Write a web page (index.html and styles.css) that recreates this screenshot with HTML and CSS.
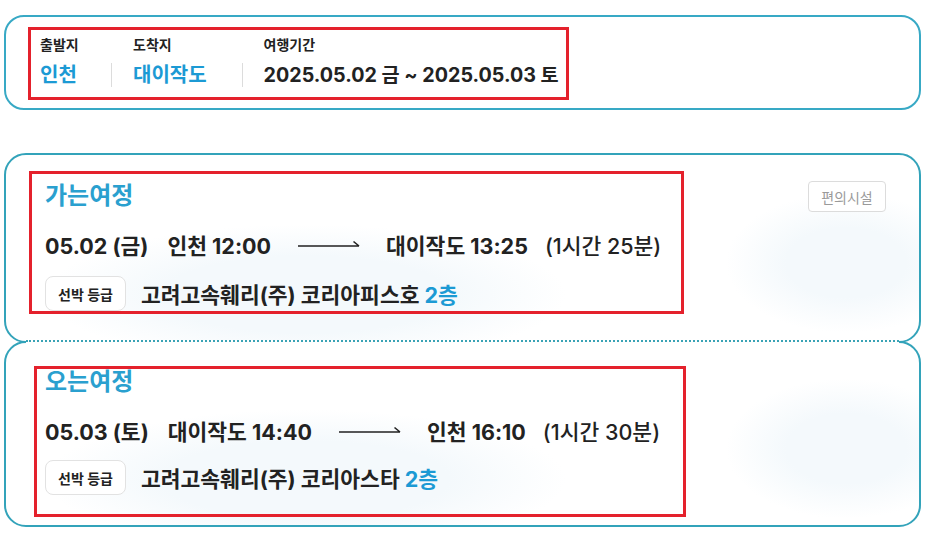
FILE: index.html
```html
<!DOCTYPE html>
<html lang="ko">
<head>
<meta charset="utf-8">
<link rel="stylesheet" href="styles.css">
</head>
<body>
<div class="page">
  <section class="summary">
    <div class="mark summary-inner">
      <div class="col">
        <div class="lbl">출발지</div>
        <div class="val blue">인천</div>
      </div>
      <div class="col sep">
        <div class="lbl">도착지</div>
        <div class="val blue">대이작도</div>
      </div>
      <div class="col sep">
        <div class="lbl">여행기간</div>
        <div class="val period">2025.05.02 금 ~ 2025.05.03 토</div>
      </div>
    </div>
  </section>

  <section class="ticket">
    <div class="leg leg-out">
      <div class="mark leg-inner out-inner">
        <h2 class="leg-title">가는여정</h2>
        <div class="route">
          <span class="date">05.02 (금)</span>
          <span class="from">인천 12:00</span>
          <svg class="arrow" width="62" height="10" viewBox="0 0 62 10"><path d="M0 7H61M55.5 2.5L61 7" fill="none" stroke="#222" stroke-width="1.6"/></svg>
          <span class="to">대이작도 13:25</span>
          <span class="dur">(1시간 25분)</span>
        </div>
        <div class="ship">
          <span class="badge">선박 등급</span>
          <span class="ship-name">고려고속훼리(주) 코리아피스호 <em>2층</em></span>
        </div>
      </div>
      <button class="fac">편의시설</button>
    </div>
    <div class="leg leg-in">
      <div class="mark leg-inner in-inner">
        <h2 class="leg-title">오는여정</h2>
        <div class="route">
          <span class="date">05.03 (토)</span>
          <span class="from">대이작도 14:40</span>
          <svg class="arrow" width="62" height="10" viewBox="0 0 62 10"><path d="M0 7H61M55.5 2.5L61 7" fill="none" stroke="#222" stroke-width="1.6"/></svg>
          <span class="to">인천 16:10</span>
          <span class="dur">(1시간 30분)</span>
        </div>
        <div class="ship">
          <span class="badge">선박 등급</span>
          <span class="ship-name">고려고속훼리(주) 코리아스타 <em>2층</em></span>
        </div>
      </div>
    </div>
  </section>
</div>
</body>
</html>
```

FILE: styles.css
```css
* { box-sizing: border-box; }
html, body { margin: 0; padding: 0; background: #fff; }
body {
  font-family: Inter, "Noto Sans CJK KR", "Noto Sans", sans-serif;
  color: #222;
}
.page {
  width: 917px;
  margin-left: 4px;
  padding-top: 15px;
}
.mark { border: 3px solid #e4212c; }

/* summary card */
.summary {
  border: 2px solid #38a9c5;
  border-radius: 20px;
  padding: 10px 22px 7px;
  height: 95px;
}
.summary-inner {
  display: inline-flex;
  padding: 6px 7px 10px 9px;
}
.col { display: flex; flex-direction: column; }
.col:first-child { width: 71px; }
.lbl {
  font-size: 14px;
  font-weight: 700;
  line-height: 18px;
  height: 18px;
}
.val {
  margin-top: 9px;
  font-size: 20px;
  font-weight: 700;
  line-height: 24px;
  white-space: nowrap;
}
.val.period { font-size: 19.7px; }
.blue { color: #1c9ad4; }
.sep .lbl { padding-left: 22px; }
.sep .val { border-left: 1px solid #dcdcdc; padding-left: 21px; padding-right: 35px; line-height: 20px; padding-top: 2px; padding-bottom: 2px; }
.sep:last-child .val { padding-right: 0; }

/* ticket */
.ticket {
  margin-top: 43px;
  position: relative;
}
.leg {
  position: relative;
  border: 2px solid #33a3ba;
  border-radius: 22px;
  background:
    radial-gradient(ellipse 260px 70px at 300px 75%, #f4f9fc 0%, #f4f9fc 55%, rgba(244,249,252,0) 100%),
    radial-gradient(ellipse 120px 70px at 840px 58%, #f4f9fc 0%, #f4f9fc 50%, rgba(244,249,252,0) 100%),
    #fff;
}
.leg-out { height: 190px; padding: 16px 0 0 23px; }
.leg-in { height: 186px; margin-top: -2px; padding: 23px 0 0 28px; }
.leg-in::before {
  content: "";
  position: absolute;
  left: 20px;
  right: 20px;
  top: -2px;
  height: 4px;
  background: #fff;
  border-top: 2px dotted #3aa3b5;
  margin-top: -1px;
}
.leg-inner { display: flex; flex-direction: column; }
.out-inner { width: 655px; padding: 7px 0 0 13px; }
.in-inner { width: 652px; padding: 0 0 19px 8px; }
.leg-title {
  margin: 0;
  font-size: 24px;
  font-weight: 700;
  line-height: 30px;
  color: #2aa0cf;
}
.in-inner .leg-title { line-height: 26px; }
.route {
  display: flex;
  align-items: center;
  height: 28px;
  margin-top: 19px;
  font-size: 21.5px;
  font-weight: 700;
  white-space: nowrap;
}
.in-inner .route { margin-top: 21px; }
.date { margin-right: 19px; }
.arrow { margin: 0 26px 0 27px; }
.dur { margin-left: 17px; font-weight: 500; }
.ship {
  display: flex;
  align-items: center;
  margin-top: 18px;
}
.in-inner .ship { margin-top: 16px; }
.badge {
  display: inline-flex;
  align-items: center;
  justify-content: center;
  width: 81px;
  height: 35px;
  border: 1px solid #e2e2e2;
  border-radius: 8px;
  font-size: 14px;
  font-weight: 700;
  background: #fff;
}
.ship-name {
  margin-left: 15px;
  font-size: 21.5px;
  font-weight: 700;
  white-space: nowrap;
}
.ship-name em { font-style: normal; color: #1c9ad4; }
.fac {
  position: absolute;
  top: 26px;
  right: 33px;
  width: 78px;
  height: 31px;
  border: 1px solid #dcdcdc;
  border-radius: 4px;
  background: #fff;
  color: #9a9a9a;
  font-family: inherit;
  font-size: 14px;
  padding: 0;
}
```
